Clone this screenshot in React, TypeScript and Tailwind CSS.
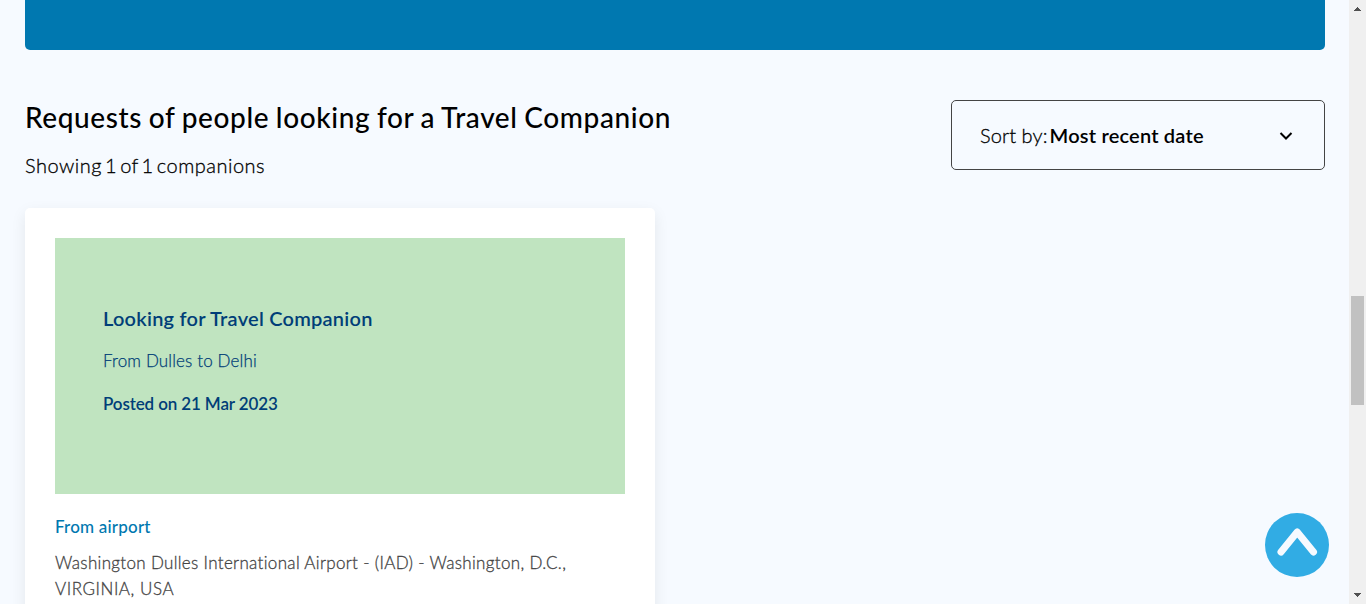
import React from "react";

function SortSelect() {
  return (
    <button className="flex h-[70px] w-[374px] items-center rounded-[5px] border border-[#444] pl-[28px] pr-[31px] text-left text-[20px] leading-[30px] text-black">
      <span className="whitespace-nowrap font-light tracking-[0.1px] [-webkit-text-stroke:0.3px]">Sort by:</span>
      <span className="whitespace-nowrap pl-[2px] font-semibold tracking-[0.2px]">Most recent date</span>
      <svg className="ml-auto h-[14px] w-[14px]" viewBox="0 0 14 14" fill="none" stroke="#000" strokeWidth="2">
        <path d="M1.5 5L7 10.5L12.5 5" />
      </svg>
    </button>
  );
}

function CompanionCard() {
  return (
    <article className="h-[500px] w-[630px] rounded-[5px] bg-white p-[30px] shadow-[0_5px_15px_rgba(0,0,0,0.08)]">
      <div className="h-[256px] bg-[#c0e4c0] pl-[48px] pt-[65px] text-[#003e78]">
        <h3 className="w-fit whitespace-nowrap text-[20px] font-semibold leading-[30px] tracking-[0.24px]">Looking for Travel Companion</h3>
        <p className="mt-[15px] w-fit whitespace-nowrap text-[17px] font-light leading-[26px] tracking-[0.15px] [-webkit-text-stroke:0.25px]">
          From Dulles to Delhi
        </p>
        <p className="mt-[17px] w-fit whitespace-nowrap text-[17px] font-semibold leading-[26px] tracking-[-0.13px]">Posted on 21 Mar 2023</p>
      </div>
      <h4 className="mt-[20px] w-fit whitespace-nowrap text-[17px] font-medium leading-[26px] tracking-[0.2px] text-[#0078b0]">
        From airport
      </h4>
      <p className="mt-[10px] whitespace-nowrap text-[17px] font-light leading-[26px] tracking-[0.33px] text-[#444] [-webkit-text-stroke:0.3px]">
        Washington Dulles International Airport - (IAD) - Washington, D.C.,
        <br />
        <span className="tracking-[0.55px]">VIRGINIA, USA</span>
      </p>
    </article>
  );
}

function Scrollbar() {
  return (
    <div className="flex h-full w-[17px] shrink-0 flex-col items-center bg-[#f0f0f0]">
      <svg className="h-[17px] w-[17px]" viewBox="0 0 17 17" fill="#505050" shapeRendering="crispEdges">
        <path d="M8 7h1v1h1v1h1v1h1v1H5v-1h1V9h1V8h1z" />
      </svg>
      <div className="mt-[279px] h-[109px] w-[13px] bg-[#c1c1c1]" />
      <svg className="mt-auto h-[17px] w-[17px]" viewBox="0 0 17 17" fill="#505050" shapeRendering="crispEdges">
        <path d="M5 6h7v1h-1v1h-1v1H9v1H8V9H7V8H6V7H5z" />
      </svg>
    </div>
  );
}

export default function App() {
  return (
    <div className="relative flex h-[604px] w-[1366px] overflow-hidden bg-[#f6faff] font-['Lato',sans-serif]">
      <main className="h-full min-w-0 flex-1 overflow-hidden pl-[25px] pr-[24px]">
        <div className="h-[50px] rounded-b-[5px] bg-[#0078b0]" />
        <section className="mt-[50px] flex h-[108px] items-start justify-between">
          <div className="-mt-px text-black">
            <h2 className="w-fit whitespace-nowrap text-[28px] font-medium leading-[36px] tracking-[0.6px] [word-spacing:-0.9px]">
              Requests of people looking for a Travel Companion
            </h2>
            <p className="mt-[15px] w-fit whitespace-nowrap text-[20px] font-light leading-[30px] tracking-[0.5px] [-webkit-text-stroke:0.3px] [word-spacing:-2.9px]">
              Showing 1 of 1 companions
            </p>
          </div>
          <SortSelect />
        </section>
        <CompanionCard />
      </main>
      <Scrollbar />
      <button aria-label="Back to top" className="absolute left-[1265px] top-[513px] h-[64px] w-[64px]">
        <svg className="h-full w-full" viewBox="0 0 64 64" fill="none">
          <circle cx="32" cy="32" r="32" fill="#31ace4" />
          <path d="M16 39L32.2 19L48.5 39" stroke="#f6faff" strokeWidth="7" strokeLinecap="round" strokeLinejoin="round" />
        </svg>
      </button>
    </div>
  );
}
